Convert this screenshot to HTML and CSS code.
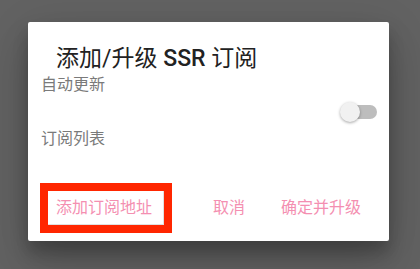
FILE: index.html
```html
<!DOCTYPE html>
<html lang="zh">
<head>
<meta charset="utf-8">
<link rel="stylesheet" href="styles.css">
</head>
<body>
<div class="dialog">
  <div class="title">添加/升级 <span class="latin">SSR</span> 订阅</div>
  <div class="label">自动更新</div>
  <div class="switch-row">
    <div class="switch">
      <div class="track"></div>
      <div class="thumb"></div>
    </div>
  </div>
  <div class="label label2">订阅列表</div>
  <div class="actions">
    <div class="btn btn-add">添加订阅地址</div>
    <div class="btn">取消</div>
    <div class="btn">确定并升级</div>
  </div>
</div>
</body>
</html>
```
FILE: styles.css
```css
html, body {
  margin: 0;
  padding: 0;
  background: #626262;
  width: 420px;
  height: 269px;
  overflow: hidden;
  font-family: Roboto, "Noto Sans CJK SC", sans-serif;
}
.dialog {
  margin: 22px 0 0 28px;
  width: 361px;
  height: 219px;
  box-sizing: border-box;
  background: #fff;
  border-radius: 2px;
  box-shadow: 0 11px 15px rgba(0,0,0,0.2), 0 24px 38px rgba(0,0,0,0.14), 0 9px 46px rgba(0,0,0,0.12);
  padding: 23px 12px 0 13px;
  display: flex;
  flex-direction: column;
}
.title {
  font-size: 23px;
  line-height: 28px;
  font-weight: 400;
  color: #222;
  padding-left: 15px;
}
.latin {
  font-weight: 500;
}
.label {
  font-size: 16px;
  line-height: 20px;
  color: #7a7a7a;
  margin-top: 2px;
}
.label2 {
  margin-top: 5px;
}
.switch-row {
  display: flex;
  justify-content: flex-end;
  margin-top: 5px;
}
.switch {
  position: relative;
  width: 40px;
  height: 24px;
  display: flex;
  align-items: center;
}
.track {
  margin-left: 7px;
  width: 33px;
  height: 14px;
  border-radius: 7px;
  background: #bdbdbd;
}
.thumb {
  position: absolute;
  left: 3px;
  top: 2px;
  width: 20px;
  height: 20px;
  border-radius: 50%;
  background: #f1f1f1;
  box-shadow: 0 1px 3px rgba(0,0,0,0.35);
}
.actions {
  display: flex;
  align-items: center;
  margin-top: 42px;
  padding-left: 7px;
  padding-right: 8px;
  gap: 20px;
}
.btn {
  font-size: 16px;
  line-height: 34px;
  height: 34px;
  padding: 0 8px;
  color: #f48fb1;
}
.btn-add {
  margin-right: auto;
  padding: 0 12px 0 8px;
  outline: 8px solid #ff2600;
  box-shadow: inset -1px -1px 0 rgba(0,0,0,0.12);
}
```
